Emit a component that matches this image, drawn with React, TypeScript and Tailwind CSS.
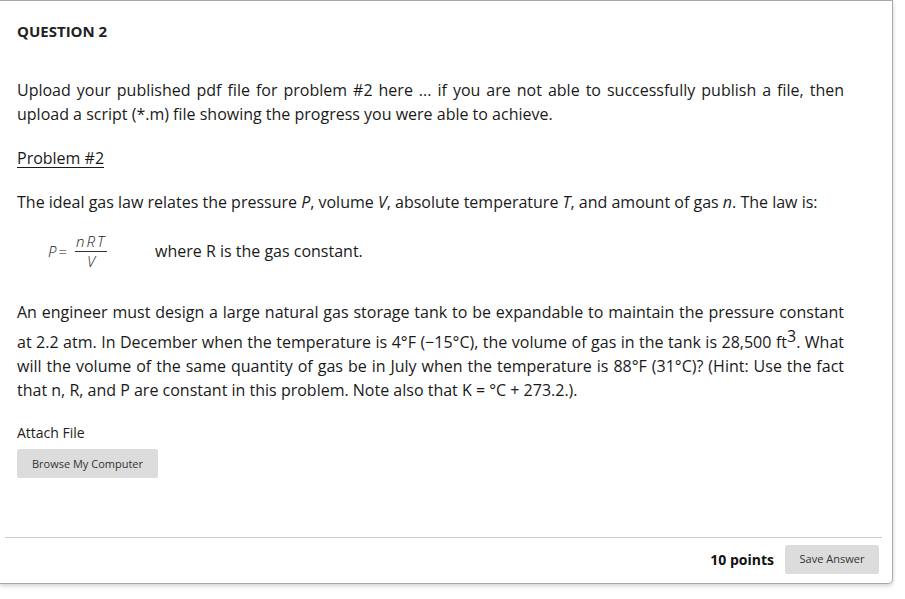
import React from "react";

export default function App() {
  return (
    <div className="w-[905px] h-[599px] bg-white overflow-hidden" style={{ fontFamily: '"Open Sans", sans-serif' }}>
      <div className="w-[893px] h-[584px] border-t border-r border-b border-[#a9a9a9] rounded-br-[5px] shadow-[0_2px_4px_rgba(0,0,0,0.18)] bg-white flex flex-col">
        <div className="pl-[17px] w-[844px] text-[#1a1a1a]">
          <div className="mt-[20px] text-[15px] leading-[20px] font-bold text-[#222]">QUESTION 2</div>
          <p className="mt-[37px] text-[16px] leading-[24px] text-justify">
            Upload your published pdf file for problem #2 here ... if you are not able to successfully publish a file, then upload a script (*.m) file showing the progress you were able to achieve.
          </p>
          <p className="mt-[20px] text-[16px] leading-[24px]">
            <span className="underline underline-offset-[3px]">Problem #2</span>
          </p>
          <p className="mt-[20px] text-[16px] leading-[24px]">
            The ideal gas law relates the pressure <i>P</i>, volume <i>V</i>, absolute temperature <i>T</i>, and amount of gas <i>n</i>. The law is:
          </p>
          <div className="mt-[14px] flex items-center h-[46px]">
            <div className="ml-[31px] w-[107px] flex items-center text-[15px] text-[#222] font-light">
              <span className="italic">P</span>
              <span className="ml-[2px]">=</span>
              <span className="ml-[8px] flex flex-col items-center leading-[17px] italic">
                <span className="px-[1px] pb-[1px] border-b border-[#333] tracking-[2px]">nRT</span>
                <span className="pt-[1px]">V</span>
              </span>
            </div>
            <span className="text-[16px] leading-[24px]">where R is the gas constant.</span>
          </div>
          <p className="mt-[26px] text-[16px] leading-[24px] text-justify">
            An engineer must design a large natural gas storage tank to be expandable to maintain the pressure constant at 2.2 atm. In December when the temperature is 4°F (−15°C), the volume of gas in the tank is 28,500 ft<span className="align-super text-[16px]">3</span>. What will the volume of the same quantity of gas be in July when the temperature is 88°F (31°C)? (Hint: Use the fact that n, R, and P are constant in this problem. Note also that K = °C + 273.2.).
          </p>
          <div className="mt-[21px] text-[14px] leading-[20px] text-[#222]">Attach File</div>
          <div className="mt-[6px] w-[141px] h-[29px] bg-[#dcdcdc] rounded-[2px] flex items-center justify-center text-[11px] text-[#333]">
            Browse My Computer
          </div>
        </div>
        <div className="mt-auto">
          <div className="ml-[5px] mr-[10px] border-t border-[#cccccc]"></div>
          <div className="flex items-center justify-end pr-[13px] pt-[7px] pb-[9px]">
            <span className="text-[14px] font-bold text-[#111]">10 points</span>
            <div className="ml-[11px] w-[94px] h-[29px] bg-[#dcdcdc] rounded-[2px] flex items-center justify-center text-[11px] text-[#333]">
              Save Answer
            </div>
          </div>
        </div>
      </div>
    </div>
  );
}
